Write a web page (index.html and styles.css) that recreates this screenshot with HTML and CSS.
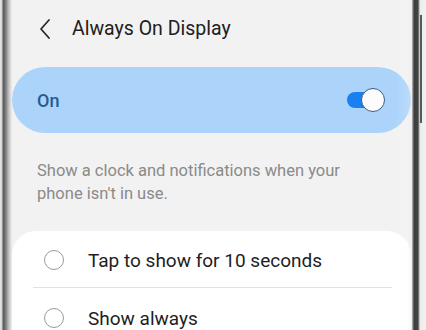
FILE: index.html
```html
<!DOCTYPE html>
<html>
<head>
<meta charset="utf-8">
<link rel="stylesheet" href="styles.css">
</head>
<body>
<div class="phone">
  <div class="bezel-left"></div>
  <div class="screen">
    <div class="header">
      <svg class="back" width="12" height="22" viewBox="0 0 12 22"><path d="M10 2 L2 11 L10 20" fill="none" stroke="#2a2a2a" stroke-width="1.8" stroke-linecap="round" stroke-linejoin="round"/></svg>
      <span class="title">Always On Display</span>
    </div>
    <div class="pill">
      <span class="pill-label">On</span>
      <div class="toggle"><div class="track"></div><div class="thumb"></div></div>
    </div>
    <p class="desc">Show a clock and notifications when your phone isn't in use.</p>
    <div class="card">
      <div class="option">
        <span class="radio"></span>
        <span class="opt-text">Tap to show for 10 seconds</span>
      </div>
      <div class="divider"></div>
      <div class="option">
        <span class="radio"></span>
        <span class="opt-text">Show always</span>
      </div>
    </div>
    <div class="edge-glare"></div>
  </div>
  <div class="bezel-right"><div class="button"></div></div>
</div>
</body>
</html>
```
FILE: styles.css
```css
html, body {
  margin: 0;
  padding: 0;
  width: 426px;
  height: 330px;
  overflow: hidden;
  background: #f4f4f4;
  font-family: Roboto, "Noto Sans", "Liberation Sans", sans-serif;
}
.phone {
  display: flex;
  height: 330px;
}
.bezel-left {
  width: 12px;
  flex: none;
  background: linear-gradient(to right, #e6e6e6 0px, #d0d0d0 2px, #5a5a5a 3px, #6e6e6e 5px, #9a9a9a 7px, #c4c4c4 9px, #e2e2e2 11px, #eeeeee 12px);
}
.screen {
  flex: 1;
  position: relative;
  background: #f2f2f2;
  overflow: hidden;
}
.header {
  height: 67px;
  display: flex;
  align-items: flex-start;
  box-sizing: border-box;
  padding-top: 17px;
}
.back {
  margin-left: 27px;
  margin-top: 1px;
}
.title {
  margin-left: 21px;
  font-size: 19.5px;
  color: #202020;
  line-height: 24px;
}
.pill {
  height: 66px;
  margin-right: 1px;
  border-radius: 33px;
  background: #acd4fa;
  display: flex;
  align-items: center;
  padding-left: 25px;
}
.pill-label {
  font-size: 18px;
  color: #245b96;
  font-weight: 500;
  margin-top: 1px;
}
.toggle {
  position: relative;
  margin-left: auto;
  margin-right: 26px;
  width: 38px;
  height: 24px;
}
.track {
  position: absolute;
  left: 0;
  top: 4px;
  width: 30px;
  height: 16px;
  border-radius: 8px;
  background: #1a7ff0;
}
.thumb {
  position: absolute;
  right: 0;
  top: 0;
  width: 22px;
  height: 22px;
  border-radius: 50%;
  background: #fcfcfc;
  border: 1px solid #3a5a80;
}
.desc {
  margin: 26px 40px 0 25px;
  font-size: 16.5px;
  line-height: 23px;
  color: #8a8a8a;
}
.card {
  margin-top: 26px;
  margin-right: 1px;
  background: #ffffff;
  border-radius: 24px 24px 0 0;
  padding-top: 12px;
}
.option {
  display: flex;
  align-items: center;
  height: 34px;
}
.radio {
  width: 20px;
  height: 20px;
  box-sizing: border-box;
  border: 1.5px solid #9a9a9a;
  border-radius: 50%;
  margin-left: 32px;
  flex: none;
}
.opt-text {
  margin-left: 24px;
  font-size: 19px;
  color: #1e1e1e;
}
.divider {
  height: 1px;
  background: #e2e2e2;
  margin: 10px 19px 13px 21px;
}
.edge-glare {
  position: absolute;
  right: 0;
  top: 0;
  bottom: 0;
  width: 16px;
  background: linear-gradient(to right, rgba(255,255,255,0) 0%, rgba(250,250,250,0.15) 70%, rgba(235,235,235,0.4) 100%);
  pointer-events: none;
}
.bezel-right {
  width: 14px;
  flex: none;
  position: relative;
  background: linear-gradient(to right, #b8b8b8 0px, #8a8a8a 1px, #3c3c3c 2px, #444 6px, #9a9a9a 7px, #ececec 8px, #f2f2f2 14px);
}
.button {
  position: absolute;
  left: 8px;
  top: 15px;
  width: 2px;
  height: 108px;
  background: #5a5a5a;
}
```
